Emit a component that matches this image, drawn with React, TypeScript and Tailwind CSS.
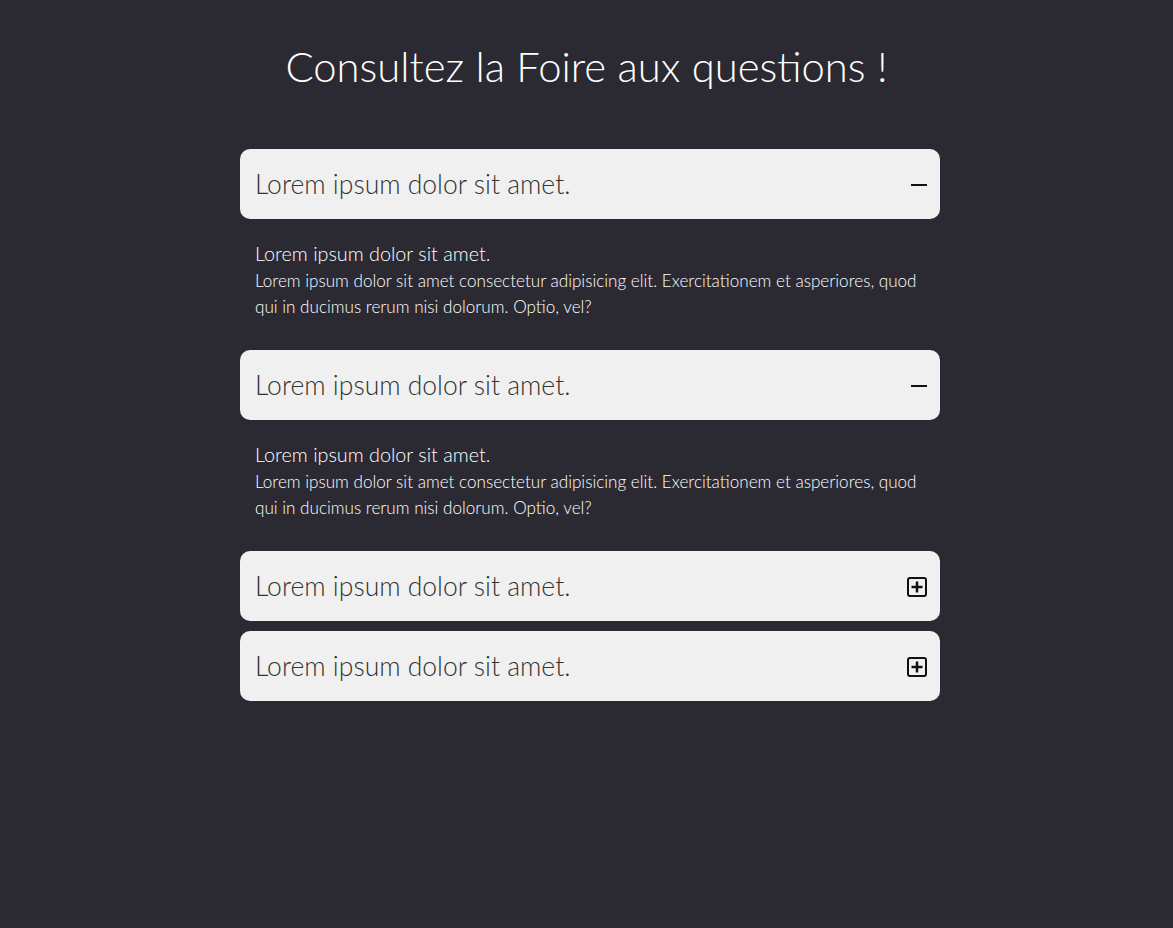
import { useState } from "react"

const items = [
  { q: "Lorem ipsum dolor sit amet.", open: true },
  { q: "Lorem ipsum dolor sit amet.", open: true },
  { q: "Lorem ipsum dolor sit amet.", open: false },
  { q: "Lorem ipsum dolor sit amet.", open: false },
]

function Minus() {
  return (
    <svg width="16" height="16" viewBox="0 0 16 16" className="shrink-0">
      <rect x="0" y="7" width="16" height="2" fill="#111" />
    </svg>
  )
}

function PlusSquare() {
  return (
    <svg width="20" height="20" viewBox="0 0 20 20" className="shrink-0">
      <rect x="1" y="1" width="18" height="18" rx="2" fill="none" stroke="#111" strokeWidth="2" />
      <rect x="4.5" y="8.75" width="11" height="2.5" fill="#111" />
      <rect x="8.75" y="4.5" width="2.5" height="11" fill="#111" />
    </svg>
  )
}

export default function App() {
  const [open, setOpen] = useState(items.map((i) => i.open))

  return (
    <div
      className="min-h-[928px] bg-[#2b2a33] pt-[38px]"
      style={{ fontFamily: "Lato, 'Open Sans', sans-serif" }}
    >
      <h1 className="text-center text-[41.8px] font-light leading-[56px] text-white">
        Consultez la Foire aux questions !
      </h1>

      {/* Accordion */}
      <div className="ml-[240px] mt-[55px] w-[700px]">
        {items.map((item, i) => (
          <div key={i} className="mb-[10px]">
            <button
              onClick={() => setOpen(open.map((o, j) => (j === i ? !o : o)))}
              className="flex h-[70px] w-full items-center justify-between rounded-[10px] bg-[#f0f0f0] pl-[15px] pr-[13px] pt-[2px] text-left"
            >
              <span className="text-[26.5px] font-light text-[#333]">{item.q}</span>
              {open[i] ? <Minus /> : <PlusSquare />}
            </button>
            {open[i] && (
              <div className="px-[15px] pt-[21px] pb-[20px] text-white">
                <p className="text-[19.8px] font-light leading-[26px]">Lorem ipsum dolor sit amet.</p>
                <p className="mt-[2px] text-[17.1px] font-light leading-[26px]">
                  Lorem ipsum dolor sit amet consectetur adipisicing elit. Exercitationem et asperiores, quod
                  qui in ducimus rerum nisi dolorum. Optio, vel?
                </p>
              </div>
            )}
          </div>
        ))}
      </div>
    </div>
  )
}
